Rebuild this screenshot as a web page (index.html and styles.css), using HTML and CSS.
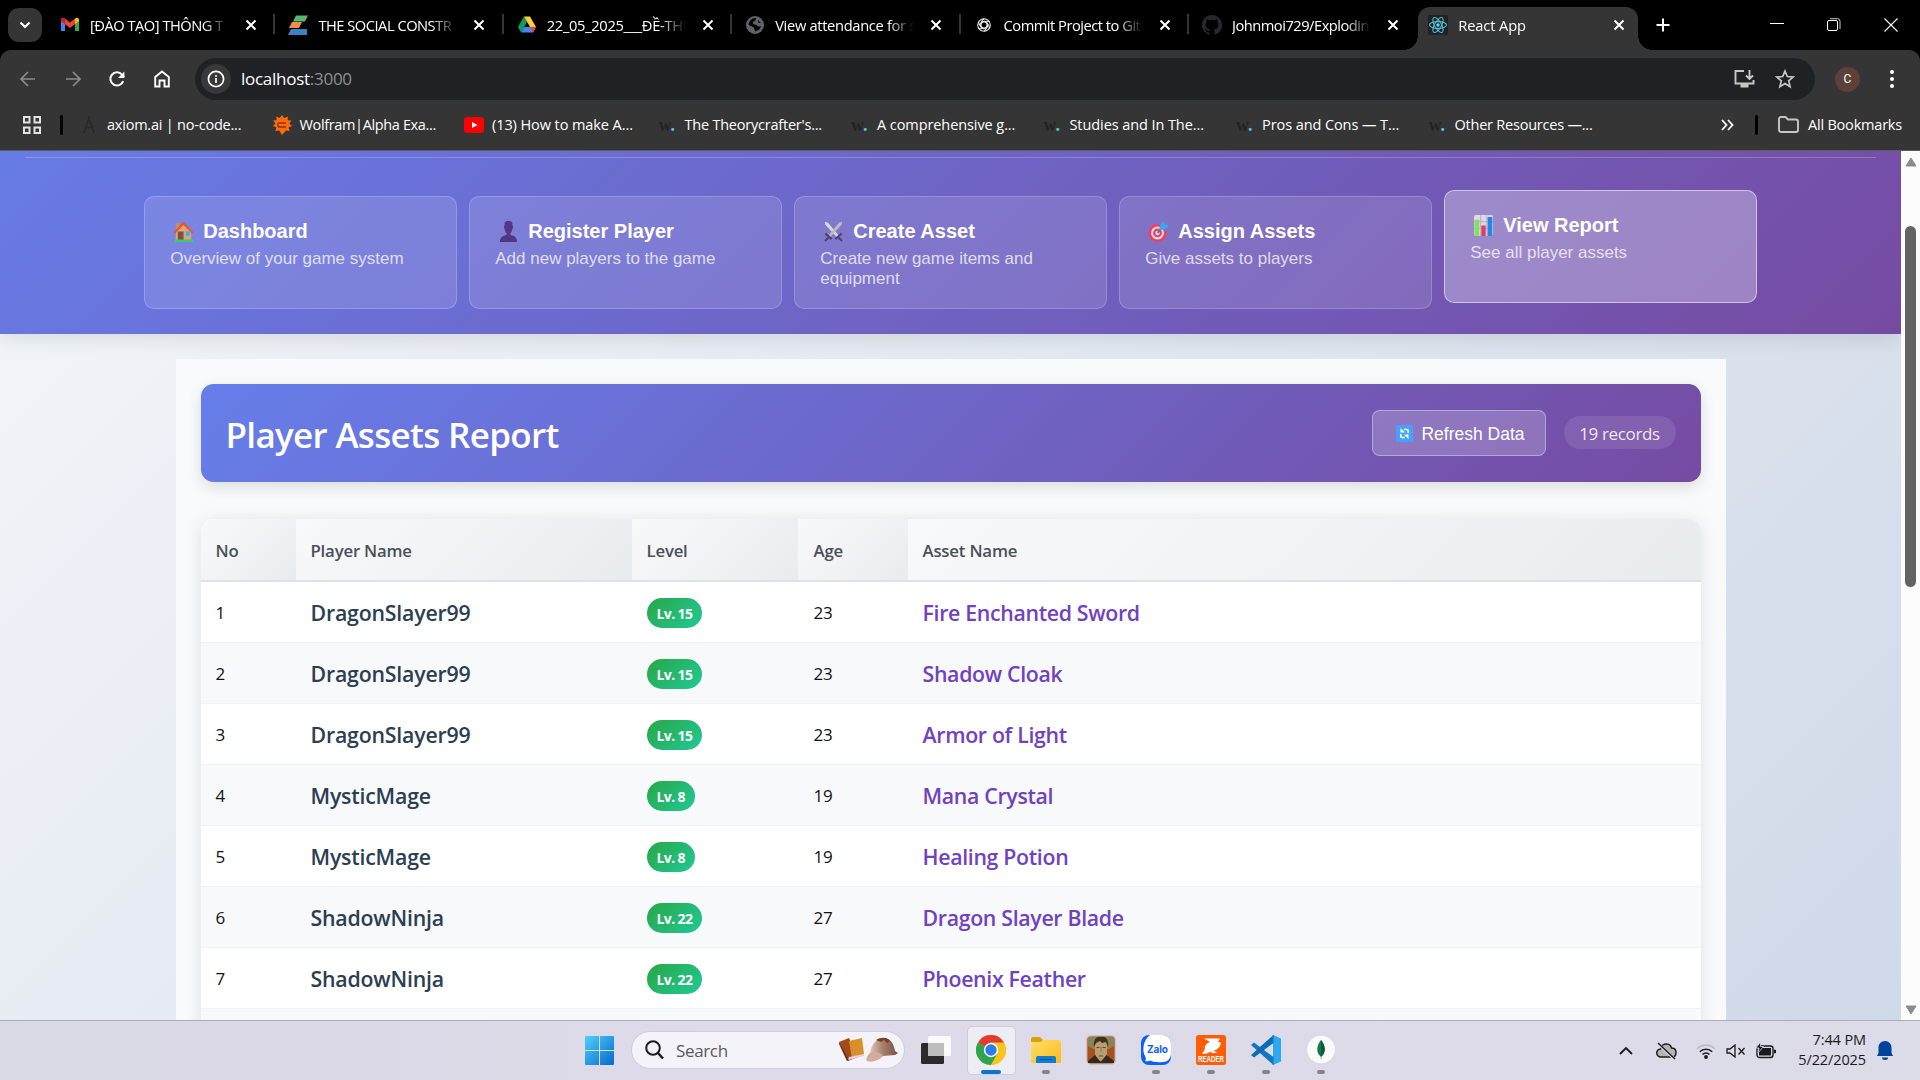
FILE: index.html
```html
<!DOCTYPE html>
<html lang="en">
<head>
<meta charset="utf-8">
<title>React App</title>
<link rel="stylesheet" href="styles.css">
</head>
<body>
<svg width="0" height="0" class="defs" aria-hidden="true">
  <defs>
    <linearGradient id="winblue" x1="0" y1="0" x2="1" y2="1"><stop offset="0" stop-color="#4fd0fb"/><stop offset="1" stop-color="#0669cb"/></linearGradient>
    <linearGradient id="folder" x1="0" y1="0" x2="1" y2="1"><stop offset="0" stop-color="#ffdf6d"/><stop offset="1" stop-color="#fdba18"/></linearGradient>
    <linearGradient id="hat" x1="0" y1="0" x2="1" y2="0"><stop offset="0" stop-color="#e2c4b4"/><stop offset=".5" stop-color="#a27b6a"/><stop offset="1" stop-color="#77503f"/></linearGradient>
  </defs>
  <symbol id="close" viewBox="0 0 12 12"><path d="M1.500 1.500l9 9M10.500 1.500l-9 9" stroke="#fff" stroke-width="2" fill="none"/></symbol>
</svg>

<header class="tabstrip">
  <div class="tab-search"><svg width="12" height="8" viewBox="0 0 12 8"><path d="M1.500 1.500L6 6l4.500-4.500" fill="none" stroke="#fff" stroke-width="2.200"/></svg></div>
  <div class="tab">
    <svg class="fav" viewBox="0 0 20 20"><path d="M1 4v12h4V8z" fill="#4285f4"/><path d="M19 4v12h-4V8z" fill="#34a853"/><path d="M1 5.500v-1C1 2.500 3 2.200 4.500 3.300L10 7.500l5.500-4.200v5.400L10 13 4.500 8.700 1 6z" fill="#ea4335"/><path d="M15 3.700C17 2 19 3 19 4.800V6l-4 3z" fill="#fbbc04"/><path d="M1 4.800V6l4 3V3.700C3 2 1 3 1 4.800z" fill="#c5221f"/></svg>
    <span class="tab-title">[ĐÀO TẠO] THÔNG T</span><svg class="x"><use href="#close"/></svg>
  </div>
  <div class="tab">
    <svg class="fav" viewBox="0 0 20 20"><path d="M8 .500h12l-3 6H5z" fill="#56b873"/><path d="M4 7h10l-3 6H1z" fill="#f58a4b"/><path d="M3 14h16v6H0z" fill="#3b82c4"/></svg>
    <span class="tab-title">THE SOCIAL CONSTR</span><svg class="x"><use href="#close"/></svg>
  </div>
  <div class="tab">
    <svg class="fav" viewBox="0 0 20 20"><path d="M7 1.500L1 12l3 5.500L10 7z" fill="#0f9d58"/><path d="M7 1.500h6L19 12h-6z" fill="#ffcd40"/><path d="M4 17.500L7 12h12l-3 5.500z" fill="#4285f4"/><path d="M13 12h6l-3 5.500z" fill="#ea4335"/></svg>
    <span class="tab-title wide">22_05_2025___ĐỀ-THI</span><svg class="x"><use href="#close"/></svg>
  </div>
  <div class="tab">
    <svg class="fav" viewBox="0 0 20 20"><circle cx="10" cy="10" r="9" fill="#5f6368"/><path d="M10 3c2 0 1 2-.5 3s-2 1-1.500 2.500S11 9 12 10.500s2.500 1 4 .500c-.5 3-3 5-6 5.500 0-2-1-2-1-3.500S6 12 3.500 9.500C4 6 7 3 10 3zM13 5l3 3h-2.500z" fill="#050505"/></svg>
    <span class="tab-title wide">View attendance for s</span><svg class="x"><use href="#close"/></svg>
  </div>
  <div class="tab">
    <svg class="fav" viewBox="0 0 20 20"><g fill="none" stroke="#e8e8e8" stroke-width="1.100"><circle cx="10" cy="10" r="6.300"/><path id="petal" d="M10 3.700c-3 2-3.300 4.500-3 8.500l3 1.800"/><use href="#petal" transform="rotate(60 10 10)"/><use href="#petal" transform="rotate(120 10 10)"/><use href="#petal" transform="rotate(180 10 10)"/><use href="#petal" transform="rotate(240 10 10)"/><use href="#petal" transform="rotate(300 10 10)"/></g></svg>
    <span class="tab-title">Commit Project to Git</span><svg class="x"><use href="#close"/></svg>
  </div>
  <div class="tab no-sep">
    <svg class="fav" viewBox="0 0 16 16"><path fill="#24292f" d="M8 0C3.580 0 0 3.580 0 8c0 3.540 2.290 6.530 5.470 7.590.4.070.55-.17.55-.38v-1.330c-2.230.48-2.700-1.070-2.700-1.070-.36-.92-.89-1.170-.89-1.170-.73-.5.050-.49.050-.49.810.060 1.230.83 1.230.83.720 1.230 1.880.87 2.340.67.070-.52.280-.87.510-1.070-1.780-.2-3.640-.89-3.640-3.950 0-.87.310-1.590.82-2.150-.08-.2-.36-1.020.080-2.120 0 0 .67-.21 2.200.82a7.600 7.600 0 0 1 4 0c1.530-1.040 2.200-.82 2.200-.82.440 1.100.160 1.920.080 2.120.51.560.82 1.270.82 2.150 0 3.070-1.870 3.750-3.650 3.950.29.250.54.730.54 1.480v2.190c0 .21.150.46.550.38A8 8 0 0 0 16 8c0-4.420-3.580-8-8-8z"/></svg>
    <span class="tab-title">Johnmoi729/Explodin</span><svg class="x"><use href="#close"/></svg>
  </div>
  <div class="tab active">
    <svg class="fav" viewBox="0 0 20 20"><rect width="20" height="20" rx="1.500" fill="#212226"/><g fill="none" stroke="#54b9d1" stroke-width="1.100"><ellipse cx="10" cy="10" rx="8.500" ry="3.400"/><ellipse cx="10" cy="10" rx="8.500" ry="3.400" transform="rotate(60 10 10)"/><ellipse cx="10" cy="10" rx="8.500" ry="3.400" transform="rotate(120 10 10)"/></g><circle cx="10" cy="10" r="1.700" fill="#61dafb"/></svg>
    <span class="tab-title">React App</span><svg class="x"><use href="#close"/></svg>
  </div>
  <svg class="newtab" width="14" height="14" viewBox="0 0 14 14"><path d="M7 .500v13M.500 7h13" stroke="#fff" stroke-width="2"/></svg>
  <div class="winctl">
    <svg width="14" height="14" viewBox="0 0 14 14"><path d="M0 5.500h14" stroke="#fff"/></svg>
    <svg width="14" height="14" viewBox="0 0 14 14"><rect x=".5" y="2.500" width="10" height="10" rx="1.500" fill="none" stroke="#fff"/><path d="M3 .700h7.500a2.500 2.500 0 0 1 2.500 2.500V11" fill="none" stroke="#ccc"/></svg>
    <svg width="14" height="14" viewBox="0 0 14 14"><path d="M.500.500l13 13M13.500.500l-13 13" stroke="#fff" stroke-width="1.100"/></svg>
  </div>
</header>

<section class="toolbar">
  <div class="nav-btns">
    <svg width="18" height="18" viewBox="0 0 18 18"><path d="M16 9H2M9 2L2 9l7 7" fill="none" stroke="#8b8b8b" stroke-width="1.700"/></svg>
    <svg width="18" height="18" viewBox="0 0 18 18"><path d="M2 9h14M9 2l7 7-7 7" fill="none" stroke="#8b8b8b" stroke-width="1.700"/></svg>
    <svg width="18" height="18" viewBox="0 0 18 18"><path d="M15.200 11.200A6.600 6.600 0 1 1 14 4.600L16 7" fill="none" stroke="#fff" stroke-width="2.100"/><path d="M16.400 1.500V8H10z" fill="#fff"/></svg>
    <svg width="18" height="18" viewBox="0 0 18 18"><path d="M2.200 16.500V7L9 1.500 15.800 7v9.500h-4.300v-6h-5v6z" fill="none" stroke="#fff" stroke-width="1.900"/></svg>
  </div>
  <div class="omnibox">
    <span class="site-info"><svg width="18" height="18" viewBox="0 0 18 18"><circle cx="9" cy="9" r="7.600" fill="none" stroke="#fff" stroke-width="1.700"/><path d="M9 8v5M9 5v1.800" stroke="#fff" stroke-width="1.700"/></svg></span>
    <span class="url">localhost<i>:3000</i></span>
    <svg width="21" height="20" viewBox="0 0 21 20"><path d="M10 2H1.500v12.500h18V11M15.500 1v8.500M12 6.500l3.500 3.500L19 6.500" fill="none" stroke="#c7c7c7" stroke-width="1.900"/><path d="M6.500 15h8v3.500h-8z" fill="#c7c7c7"/></svg>
    <svg width="20" height="20" viewBox="0 0 20 20"><path d="M10 2l2.300 5.500 5.900.5-4.500 3.900 1.400 5.800L10 14.600l-5.100 3.100 1.400-5.800L1.800 8l5.900-.5z" fill="none" stroke="#c7c7c7" stroke-width="1.700"/></svg>
  </div>
  <span class="avatar">C</span>
  <svg class="kebab" width="6" height="20" viewBox="0 0 6 20"><g fill="#fff"><circle cx="3" cy="3" r="2"/><circle cx="3" cy="10" r="2"/><circle cx="3" cy="17" r="2"/></g></svg>
</section>

<nav class="bookmarks">
  <svg class="apps" width="18" height="18" viewBox="0 0 18 18"><path d="M1 1h5.500v5.500H1zM11.500 1H17v5.500h-5.500zM1 11.500h5.500V17H1zM11.500 11.500H17V17h-5.500z" fill="none" stroke="#e3e3e3" stroke-width="2"/></svg>
  <span class="bar"></span>
  <div class="marks">
    <div class="mark"><svg viewBox="0 0 20 20"><path d="M10 1v5M8 6h4M8.500 7L5 18M11.500 7L15 18M6 12.500h8" stroke="#282828" stroke-width="1.500" fill="none"/></svg><span>axiom.ai | no-code...</span></div>
    <div class="mark"><svg viewBox="0 0 20 20"><path d="M10 0l2.300 3 3.500-1.500-.1 3.700 3.800.3-2.200 3 2.700 2.500-3.500 1.400 1.200 3.600-3.700-.4L10 20l-2.700-4.400-4 .4 1.200-3.600L1 11l2.500-2.500L1 5.500l3.600-.3-.2-3.700L7.700 3z" fill="#ff6a0d"/><path d="M6 8h8M6 12h8M6 8v4" stroke="#8a3500" stroke-width="1.400"/></svg><span class="snug">Wolfram|Alpha Exa...</span></div>
    <div class="mark"><svg viewBox="0 0 20 20"><rect y="2" width="20" height="16" rx="3.500" fill="#f00"/><path d="M8 7l5.500 3L8 13z" fill="#fff"/></svg><span class="loose">(13) How to make A...</span></div>
    <div class="mark"><b class="w">w<i>.</i></b><span>The Theorycrafter's...</span></div>
    <div class="mark"><b class="w">w<i>.</i></b><span class="loose">A comprehensive g...</span></div>
    <div class="mark"><b class="w">w<i>.</i></b><span class="loose">Studies and In The...</span></div>
    <div class="mark"><b class="w">w<i>.</i></b><span class="loose">Pros and Cons — T...</span></div>
    <div class="mark"><b class="w">w<i>.</i></b><span>Other Resources —...</span></div>
  </div>
  <svg class="more" width="13" height="12" viewBox="0 0 13 12"><path d="M1 1l4.500 5L1 11M7 1l4.500 5L7 11" fill="none" stroke="#fff" stroke-width="1.800"/></svg>
  <span class="bar"></span>
  <svg class="bfolder" width="21" height="17" viewBox="0 0 21 17"><path d="M1 3a2 2 0 0 1 2-2h4.500l2.500 2.500h8a2 2 0 0 1 2 2V14a2 2 0 0 1-2 2H3a2 2 0 0 1-2-2z" fill="none" stroke="#c7c7c7" stroke-width="1.900"/></svg>
  <span class="all">All Bookmarks</span>
</nav>

<main class="viewport">
  <div class="page">
    <div class="app-header">
      <div class="rule"></div>
      <div class="cards">
        <div class="card">
          <h3><svg viewBox="0 0 22 22"><path d="M3 2h4v6H3z" fill="#c98d5b"/><path d="M3 10l8-8 8 8v10H3z" fill="#dda676"/><path d="M.500 12L11 .800 21.500 12l-1.700 1.200L11 4.200l-8.800 9z" fill="#e9542f"/><path d="M5 11h6v9H5z" fill="#805143"/><path d="M13.500 11h4v4.500h-4z" fill="#2fb6ee"/><rect x="1" y="19.500" width="20" height="2.500" rx="1" fill="#3ccb68"/></svg>Dashboard</h3>
          <p>Overview of your game system</p>
        </div>
        <div class="card">
          <h3><svg viewBox="0 0 22 22"><path d="M7 1.500c2-2 6-2 8 0v3c1 .5 1 3 0 4-.3 2.500-1.200 4-2.500 5l1.500 1.500c3.500.5 6 3 6 7H2c0-4 2.500-6.500 6-7l1.500-1.500C8.200 12.500 7.300 11 7 8.500c-1-1-1-3.500 0-4z" fill="#533785"/></svg>Register Player</h3>
          <p>Add new players to the game</p>
        </div>
        <div class="card">
          <h3><svg viewBox="0 0 22 22"><path d="M2 1l3 .5L18 17l-2 1.500L2.500 4z" fill="#dadada"/><path d="M20 1l-3 .5L4 17l2 1.500L19.500 4z" fill="#bcbcc2"/><path d="M2.500 13l6.500 6M2 21L6.500 16.500M19.500 13L13 19M20 21l-4.500-4.500" stroke="#51416a" stroke-width="2.200"/></svg>Create Asset</h3>
          <p>Create new game items and equipment</p>
        </div>
        <div class="card">
          <h3><svg viewBox="0 0 22 22"><circle cx="10" cy="12.500" r="9.500" fill="#e64562"/><circle cx="10" cy="12.500" r="6.800" fill="#f0d5e4"/><circle cx="10" cy="12.500" r="4.600" fill="#e64562"/><circle cx="10" cy="12.500" r="2.300" fill="#f0d5e4"/><path d="M10 12.500l6-7" stroke="#456fbf" stroke-width="1.800"/><path d="M11.500 9.500l1.500-5.500 4-4 .5 3.500L22 5l-4 4z" fill="#36a9f4"/></svg>Assign Assets</h3>
          <p>Give assets to players</p>
        </div>
        <div class="card active">
          <h3><svg viewBox="0 0 22 22"><rect x="1" y="0" width="20" height="22" rx="2" fill="#dfd9e6"/><path d="M1 7h20M1 14h20M8 0v22M14.500 0v22" stroke="#b8b1c2"/><path d="M1.500 5h5v17h-5z" fill="#85df62"/><path d="M8.700 11h4.600v11H8.700z" fill="#e23a70"/><path d="M15.300 2h5v20h-5z" fill="#2489de"/></svg>View Report</h3>
          <p>See all player assets</p>
        </div>
      </div>
    </div>

    <div class="report">
      <div class="banner">
        <h2>Player Assets Report</h2>
        <button class="refresh"><svg width="17" height="17" viewBox="0 0 17 17"><rect width="17" height="17" rx="1.500" fill="#46a1f8"/><path d="M12.200 8V6a1.500 1.500 0 0 0-1.500-1.500H8M4.800 9v2a1.500 1.500 0 0 0 1.500 1.500H9" fill="none" stroke="#fff" stroke-width="1.700"/><path d="M4.500 3v4.500H9zM12.500 14V9.500H8z" fill="#fff"/></svg><span>Refresh Data</span></button>
        <span class="records">19 records</span>
      </div>
      <div class="table-wrap">
        <table>
          <thead><tr><th class="c-no">No</th><th class="c-name">Player Name</th><th class="c-level">Level</th><th class="c-age">Age</th><th>Asset Name</th></tr></thead>
          <tbody>
            <tr><td>1</td><td class="name">DragonSlayer99</td><td><span class="lv">Lv. 15</span></td><td>23</td><td class="asset">Fire Enchanted Sword</td></tr>
            <tr><td>2</td><td class="name">DragonSlayer99</td><td><span class="lv">Lv. 15</span></td><td>23</td><td class="asset">Shadow Cloak</td></tr>
            <tr><td>3</td><td class="name">DragonSlayer99</td><td><span class="lv">Lv. 15</span></td><td>23</td><td class="asset">Armor of Light</td></tr>
            <tr><td>4</td><td class="name">MysticMage</td><td><span class="lv">Lv. 8</span></td><td>19</td><td class="asset">Mana Crystal</td></tr>
            <tr><td>5</td><td class="name">MysticMage</td><td><span class="lv">Lv. 8</span></td><td>19</td><td class="asset">Healing Potion</td></tr>
            <tr><td>6</td><td class="name">ShadowNinja</td><td><span class="lv">Lv. 22</span></td><td>27</td><td class="asset">Dragon Slayer Blade</td></tr>
            <tr><td>7</td><td class="name">ShadowNinja</td><td><span class="lv">Lv. 22</span></td><td>27</td><td class="asset">Phoenix Feather</td></tr>
            <tr><td></td><td></td><td></td><td></td><td></td></tr>
          </tbody>
        </table>
      </div>
    </div>
  </div>
  <div class="scrollbar">
    <svg width="12" height="10" viewBox="0 0 12 10"><path d="M6 1l5 8H1z" fill="#8b8b8b" stroke="#8b8b8b" stroke-linejoin="round"/></svg>
    <div class="track"><div class="thumb"></div></div>
    <svg width="12" height="10" viewBox="0 0 12 10"><path d="M6 9l5-8H1z" fill="#8b8b8b" stroke="#8b8b8b" stroke-linejoin="round"/></svg>
  </div>
</main>

<footer class="taskbar">
  <svg class="start" width="29" height="29" viewBox="0 0 29 29"><path d="M1 0h13v14H0V1a1 1 0 0 1 1-1zM15 0h13a1 1 0 0 1 1 1v13H15zM0 15h14v14H1a1 1 0 0 1-1-1zM15 15h14v13a1 1 0 0 1-1 1H15z" fill="url(#winblue)"/></svg>
  <div class="search">
    <svg width="19" height="20" viewBox="0 0 19 20"><circle cx="8" cy="8" r="6.800" fill="none" stroke="#1c1c1c" stroke-width="2"/><path d="M13 13l5 5.500" stroke="#1c1c1c" stroke-width="2.500"/></svg>
    <span>Search</span>
    <svg class="art" width="60" height="26" viewBox="0 0 60 26"><path d="M0 5l10-4 9 19-10 4z" fill="#a34a1d"/><path d="M0 5l10 18-2 1L0 7z" fill="#6c2c13"/><path d="M10 4l13-3 2 16-12 5z" fill="#d8902a"/><path d="M9 23l16-4v-2l-15 3z" fill="#e6d0dc"/><path d="M31 17C32 8 37 1 45 1c7 0 10 7 11 13l3 2-3 2-12 1z" fill="url(#hat)"/><path d="M37 3c5-3 11-3 14 1l-3 2-3-3-3 2z" fill="#7a4021"/><path d="M31 16c4-2 10-1 13 3-3 4-12 7-16 5-2-2 1-6 3-8z" fill="#d2ad9d"/></svg>
  </div>
  <svg class="taskview" width="30" height="28" viewBox="0 0 30 28"><rect y="7" width="23" height="21" rx="1.500" fill="#2b2b2b"/><rect x="7" width="23" height="20" rx="1.500" fill="#fafafa"/><path d="M7 7h16v13H7z" fill="#bdbdbd"/></svg>
  <div class="tile"><svg width="30" height="30" viewBox="0 0 30 30"><circle cx="15" cy="15" r="15" fill="#fcc31e"/><path d="M15 15L2 7.500A15 15 0 0 1 28 7.500z" fill="#e33b2e"/><path d="M2 7.500a15 15 0 0 0 13 22.500l6.500-11.300L15 15z" fill="#2da44e"/><path d="M15 7.500h13A15 15 0 0 1 15 30l6.500-11.300z" fill="#fcc31e"/><circle cx="15" cy="15" r="7.200" fill="#fff"/><circle cx="15" cy="15" r="5.700" fill="#2f7ded"/></svg><i class="run on"></i></div>
  <div class="app"><svg width="30" height="30" viewBox="0 0 30 30"><path d="M0 4a2 2 0 0 1 2-2h7l3 3-2 4H0z" fill="#dda009"/><path d="M0 7h10l2-2h16a2 2 0 0 1 2 2v21H0z" fill="url(#folder)"/><path d="M5 28v-5a2 2 0 0 1 2-2h16a2 2 0 0 1 2 2v5z" fill="#117bd0"/><path d="M9 24.500h12" stroke="#064f93"/></svg><i class="run"></i></div>
  <div class="app"><svg width="30" height="30" viewBox="0 0 30 30"><rect x=".7" y=".7" width="28.600" height="28.600" rx="4" fill="#a8501c" stroke="#c9c6c3" stroke-width="1.400"/><path d="M2 2h26v9l-5 3H7l-5-3z" fill="#8a8355"/><path d="M9 8c2-4 9-5 12 0v11c-1 4-4 7-6 7s-5-3-6-7z" fill="#b89d70"/><path d="M8 12C7 4 11 1 15 2c5-1 8 3 7 10l-2-5-4 1-2-2-4 2z" fill="#403220"/><path d="M10.500 12.500h3M16.500 12.500h3M13 21h4" stroke="#5a4a2f" stroke-width="1.200"/><path d="M15 12v5" stroke="#8f7a50"/><path d="M2 26l7-6 5.500 7 6-7 7.500 6v2H2z" fill="#33291f"/></svg></div>
  <div class="app"><svg width="30" height="30" viewBox="0 0 30 30"><path d="M8 0h14a8 8 0 0 1 8 8v14a8 8 0 0 1-8 8H8a8 8 0 0 1-8-8V8a8 8 0 0 1 8-8z" fill="#0b62f2"/><path d="M9 0h13a8 8 0 0 1 8 8v11a8 8 0 0 1-8 8c-6 .5-10 0-13-1.500-2 1-3.500 1-5 .5 1.500-1.500 1-3 0-5C1 16 2 5 9 0z" fill="#fff"/><text x="16.500" y="17.500" text-anchor="middle" textLength="21" class="zalo">Zalo</text></svg><i class="run"></i></div>
  <div class="app"><svg width="30" height="30" viewBox="0 0 30 30"><rect width="30" height="30" rx="2.500" fill="#ff5d05"/><path d="M8 3.500h16l-2 3.500 3 .5c-1 6-5 8-9 8.500l-5 2.500-5 .5 3-5c-1-3 2-6 5-7z" fill="#fff"/><path d="M15.500 14.500l6 3.500h-6z" fill="#fff"/><text x="15" y="27" text-anchor="middle" textLength="26" lengthAdjust="spacingAndGlyphs" class="reader">READER</text></svg><i class="run"></i></div>
  <div class="app"><svg width="30" height="30" viewBox="0 0 30 30"><path d="M22 0l8 3.500v23L22 30z" fill="#2fa9ee"/><path d="M0 10l3-2.500L22.500 22v8z" fill="#1277bd"/><path d="M0 20l3 2.500L22.500 8V0z" fill="#0c6cb3"/><path d="M22 0v8M22 22v8" stroke="#1787cf"/></svg><i class="run"></i></div>
  <div class="app"><svg width="30" height="30" viewBox="0 0 30 30"><circle cx="15" cy="14.500" r="13.800" fill="#fafafa"/><path d="M15 5c5 6 5 13 0 17-5-4-5-11 0-17z" fill="#12794d"/><path d="M15 5c5 6 5 13 0 17z" fill="#0b5b3b"/><path d="M15 21v3" stroke="#8fb7a2"/></svg><i class="run"></i></div>
  <div class="tray">
    <svg class="t1" width="14" height="9" viewBox="0 0 14 9"><path d="M1 8l6-6 6 6" fill="none" stroke="#1a1a1a" stroke-width="1.800"/></svg>
    <svg class="t2" width="21" height="18" viewBox="0 0 21 18"><path d="M5 15a4 4 0 0 1-.5-8C5 3.500 8 1.500 11 2c2.500.3 4 2 4.500 4 3 0 4.500 2 4.500 4.500S18.500 15 16 15z" fill="#b5b5b8" stroke="#1d1d1d" stroke-width="1.500"/><path d="M3 2.500l15 14" stroke="#dcdae8" stroke-width="3"/><path d="M2 1l17 16" stroke="#1d1d1d" stroke-width="1.500"/></svg>
    <svg class="t3" width="20" height="16" viewBox="0 0 20 16"><g fill="none" stroke-width="1.600"><path d="M1 6a12.500 12.500 0 0 1 18 0" stroke="#bdbbc8"/><path d="M3.800 8.800a8.800 8.800 0 0 1 12.400 0M6.500 11.500a5 5 0 0 1 7 0" stroke="#1a1a1a"/></g><circle cx="10" cy="14" r="1.900" fill="#1a1a1a"/></svg>
    <svg class="t4" width="20" height="14" viewBox="0 0 20 14"><path d="M1 5v4h3l5 4V1L4 5z" fill="none" stroke="#1a1a1a" stroke-width="1.300"/><path d="M12.500 4l6 6.500M18.500 4l-6 6.500" stroke="#1a1a1a" stroke-width="1.300"/></svg>
    <svg class="t5" width="20" height="17" viewBox="0 0 20 17"><rect x="1" y="4" width="16" height="11.500" rx="2.500" fill="none" stroke="#1a1a1a" stroke-width="1.400"/><rect x="3" y="6" width="12" height="7.500" fill="#1a1a1a"/><path d="M18 7.500l2 .5v3l-2 .5z" fill="#1a1a1a"/><path d="M4.500 0L0 6h3l-1 5 5.500-6.500H4.500z" fill="#1a1a1a" stroke="#dcdae8" stroke-width=".8"/></svg>
    <div class="clock"><span>7:44 PM</span><span>5/22/2025</span></div>
    <svg class="t6" width="16" height="19" viewBox="0 0 16 19"><path d="M8 0c4 0 6.500 3 6.500 6.500V12l1.500 3H0l1.500-3V6.500C1.500 3 4 0 8 0z" fill="#01429c"/><path d="M5 16.500h6a3 2.500 0 0 1-6 0z" fill="#01429c"/></svg>
  </div>
</footer>
</body>
</html>
```
FILE: styles.css
```css
* { box-sizing: border-box; }
html, body { margin: 0; height: 1080px; overflow: hidden; }
body {
  display: flex;
  flex-direction: column;
  font-family: "Open Sans", "Noto Sans", sans-serif;
  background: #000;
  color: #fff;
}
.defs { position: absolute; }
svg { display: block; flex: none; }
i { font-style: normal; }

/* tab strip */
.tabstrip { height: 50px; flex: none; display: flex; align-items: stretch; background: #000; padding-left: 8px; }
.tab-search { width: 34px; height: 34px; margin: 8px 5px 0 0; border-radius: 11px; background: #353535; display: flex; align-items: center; justify-content: center; flex: none; }
.tab {
  width: 228.400px; flex: none; display: flex; align-items: center; padding: 0 0 0 13px;
  background: linear-gradient(#353535, #353535) right 0 top 14px / 2px 20px no-repeat;
}
.tab.no-sep { background: none; }
.fav { width: 20px; height: 20px; margin-right: 10px; }
.tab-title {
  width: 141px; margin-right: 14px; overflow: hidden; white-space: nowrap; font-size: 14.700px; letter-spacing: -.5px;
  -webkit-mask-image: linear-gradient(90deg, #000 113px, transparent 139px);
  mask-image: linear-gradient(90deg, #000 113px, transparent 139px);
}
.tab-title.wide { letter-spacing: -.33px; }
.x { width: 12px; height: 12px; }
.tab.active {
  width: 220px; margin: 7px 0 0 1px; padding: 0 0 7px 10px; border-radius: 12px 12px 0 0; background: #353535; position: relative;
}
.tab.active .tab-title { letter-spacing: -.15px; }
.tab.active::before, .tab.active::after {
  content: ""; position: absolute; bottom: 0; width: 14px; height: 14px;
}
.tab.active::before { left: -14px; background: radial-gradient(circle at 0 0, #000 13.500px, #353535 14px); }
.tab.active::after { right: -14px; background: radial-gradient(circle at 100% 0, #000 13.500px, #353535 14px); }
.newtab { margin: 18px 0 0 18px; }
.winctl { margin-left: auto; display: flex; gap: 43px; padding: 18px 22px 0 0; }

/* toolbar */
.toolbar { height: 50px; flex: none; display: flex; align-items: center; background: #353535; padding: 8px 25px 0 19px; border-radius: 11px 11px 0 0; }
.nav-btns { display: flex; gap: 26.700px; width: 176px; flex: none; }
.omnibox { width: 1620px; flex: none; height: 42px; border-radius: 21px; background: #202124; display: flex; align-items: center; padding: 0 20px 0 6px; }
.site-info { width: 30px; height: 30px; border-radius: 50%; background: #383838; display: flex; align-items: center; justify-content: center; }
.url { flex: 1; margin: -1px 0 0 10px; font-size: 17px; letter-spacing: -.27px; }
.url i { color: #8f9195; }
.omnibox > svg + svg { margin-left: 20px; }
.avatar { width: 25px; height: 25px; margin-left: 20px; flex: none; border-radius: 50%; background: #5d4037; display: flex; align-items: center; justify-content: center; font: 12px Roboto, sans-serif; }
.kebab { margin-left: 29px; }

/* bookmarks bar */
.bookmarks { height: 51px; flex: none; display: flex; align-items: center; background: #353535; border-bottom: 1px solid #5c5c58; padding: 0 18px 1px 23px; font-size: 14.500px; letter-spacing: -.22px; white-space: nowrap; }
.bookmarks .all { margin-top: -1px; letter-spacing: -.2px; }
.bar { width: 3px; height: 20px; border-radius: 2px; background: #000; }
.apps { margin-right: 19px; }
.marks { display: flex; margin-left: 16px; }
.mark { width: 192.500px; display: flex; align-items: center; }
.mark svg { width: 20px; height: 20px; margin-right: 8px; }
.mark span { margin-top: -1px; }
.mark .snug { letter-spacing: -.36px; }
.mark .loose { letter-spacing: -.08px; }
.w { width: 28px; padding-left: 2px; font: bold 18px/20px "Liberation Serif", serif; color: #232323; letter-spacing: 0; }
.w i { color: #56c3ee; }
.more { margin: 0 21px 0 auto; }
.bfolder { margin: 0 9px 0 20px; }

/* page */
.viewport { height: 869px; flex: none; display: flex; overflow: hidden; }
.page { width: 1901px; flex: none; overflow: hidden; background: linear-gradient(135deg, #f5f7fa, #c3cfe2) 0 -128px / 1901px 2000px no-repeat; }
.app-header {
  height: 183px; padding: 6px 25px 0; background: linear-gradient(135deg, #667eea, #764ba2) left bottom / 100% 311px no-repeat;
  box-shadow: 0 5px 20px rgba(0, 0, 0, .1); position: relative;
}
.rule { height: 1px; background: rgba(255, 255, 255, .22); }
.cards { width: 1612.500px; margin: 38px auto 0; display: flex; gap: 12.500px; font-family: "Liberation Sans", Arial, sans-serif; }
.card { flex: 1; height: 113px; border: 1px solid rgba(255, 255, 255, .2); border-radius: 10px; background: rgba(255, 255, 255, .12); padding: 20px 25px 0; }
.card.active { transform: translateY(-6px); background: rgba(255, 255, 255, .3); border-color: rgba(255, 255, 255, .5); }
.card h3 { margin: 0; display: flex; align-items: center; font-size: 20px; line-height: 28px; font-weight: bold; }
.card h3 svg { width: 21px; height: 21px; margin: 0 9px 0 3px; }
.card p { margin: 4px 0 0; font-size: 17px; line-height: 20px; color: rgba(255, 255, 255, .76); }

.report { width: 1550px; margin: 25px auto 0; padding: 25px; background: #f8fafc; height: 700px; }
.banner {
  height: 98px; padding: 0 25px; display: flex; align-items: center; border-radius: 12.500px;
  background: linear-gradient(135deg, #667eea, #764ba2); box-shadow: 0 5px 15px rgba(0, 0, 0, .12);
}
.banner h2 { margin: 3px auto 0 0; font-size: 35px; font-weight: 600; letter-spacing: -.68px; }
.refresh { width: 174px; height: 46px; display: flex; align-items: center; justify-content: center; gap: 8px; border: 1px solid rgba(255, 255, 255, .35); border-radius: 7.500px; background: rgba(255, 255, 255, .2); color: #fff; font: 17.500px "Liberation Sans", Arial, sans-serif; margin: 0 18px 0 0; padding: 0 0 0 4px; }
.refresh span { margin-top: 2px; }
.records { width: 112px; height: 33px; margin-top: -1px; border-radius: 17px; background: rgba(255, 255, 255, .1); text-align: center; line-height: 35px; font-size: 17px; letter-spacing: -.35px; color: rgba(255, 255, 255, .88); }

.table-wrap { margin-top: 37px; border-radius: 12.500px 12.500px 0 0; overflow: hidden; box-shadow: 0 2px 18px rgba(0, 0, 0, .1); height: 700px; background: #fff; }
table { width: 1500px; border-collapse: separate; border-spacing: 0; table-layout: fixed; }
th { height: 63px; padding: 2px 15px 0; text-align: left; font-size: 16.800px; font-weight: 600; letter-spacing: -.2px; color: #495057; background: linear-gradient(135deg, #f8f9fa, #e9ecef); border-bottom: 2px solid #dee2e6; }
.c-no { width: 95px; }
.c-name { width: 336px; }
.c-level { width: 166px; }
.c-age { width: 110px; }
td { height: 61px; padding: 0 15px; font-size: 17px; letter-spacing: -.3px; color: #111; border-bottom: 1px solid #f1f3f4; }
tbody tr:nth-child(even) { background: #f8f9fb; }
td:nth-child(4), th:nth-child(4) { padding-left: 16px; }
.name, .asset { font-size: 21.300px; font-weight: 600; letter-spacing: -.2px; color: #2c3e50; }
.asset { color: #6f42c1; letter-spacing: -.32px; }
.lv { display: inline-block; height: 30px; margin-top: 1px; padding: 0 10px; border-radius: 15px; line-height: 31px; font-size: 14px; font-weight: 700; letter-spacing: -.6px; color: #fff; background: linear-gradient(135deg, #28a745, #20c997); vertical-align: middle; }

.scrollbar { width: 19px; background: #fcfcfc; display: flex; flex-direction: column; align-items: center; padding: 6px 0 5px; }
.track { flex: 1; padding-top: 59px; }
.thumb { width: 11px; height: 361px; border-radius: 6px; background: #636363; }

/* taskbar */
.taskbar { height: 60px; flex: none; display: flex; background: linear-gradient(90deg, #dad9e6, #dedae9 40%, #dcdbe8); border-top: 1px solid #aeacb8; padding-left: 585px; color: #1a1a1a; }
.start { margin-top: 15px; }
.search { width: 274px; height: 38px; margin: 10px 0 0 17px; border-radius: 19px; border: 1px solid #cfccdb; background: #f4f3f9; display: flex; align-items: center; padding: 0 5px 0 13px; font-size: 17px; letter-spacing: -.35px; color: #5a5a5a; }
.search span { margin-left: 12px; }
.art { margin-left: auto; }
.taskview { margin: 15px 0 0 15.500px; }
.tile, .app { display: flex; flex-direction: column; align-items: center; }
.tile { width: 49px; height: 49px; margin: 5px 0 0 16px; padding: 8px 1px 0 0; border-radius: 5px; background: #eeecf5; border: 1px solid #d0cddb; }
.app { width: 30px; padding-top: 14px; margin-left: 25px; }
.tile + .app { margin-left: 15px; }
.run { width: 8px; height: 4px; border-radius: 2px; background: #85838e; margin-top: 5px; }
.run.on { width: 20px; background: #0a74d4; }
.zalo { font: bold 10px Inter, sans-serif; fill: #0b62f2; }
.reader { font: bold 9px "Liberation Sans", sans-serif; fill: #fff; }
.tray { margin-left: auto; display: flex; align-items: center; padding-right: 27px; }
.t2 { margin-left: 23px; }
.t3 { margin-left: 19px; }
.t4 { margin-left: 10px; }
.t5 { margin-left: 10px; }
.clock { width: 90px; display: flex; flex-direction: column; align-items: flex-end; font-size: 14.500px; line-height: 20px; letter-spacing: -.1px; padding-bottom: 2px; }
.t6 { margin-left: 11px; }
```
